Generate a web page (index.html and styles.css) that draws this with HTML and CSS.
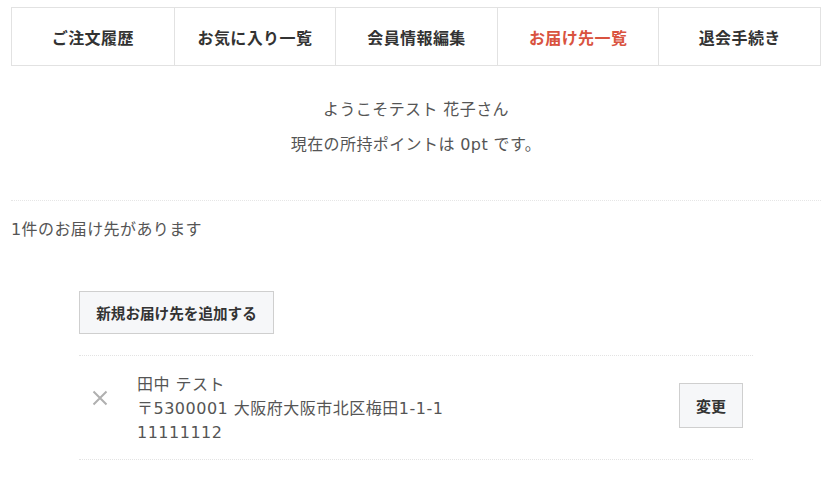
FILE: index.html
```html
<!DOCTYPE html>
<html lang="ja">
<head>
<meta charset="utf-8">
<title>お届け先一覧</title>
<link rel="stylesheet" href="styles.css">
</head>
<body>
<div class="page">
  <nav class="tabs">
    <a class="tab">ご注文履歴</a>
    <a class="tab">お気に入り一覧</a>
    <a class="tab">会員情報編集</a>
    <a class="tab active">お届け先一覧</a>
    <a class="tab">退会手続き</a>
  </nav>
  <div class="greeting">
    <p>ようこそテスト 花子さん</p>
    <p>現在の所持ポイントは 0pt です。</p>
  </div>
  <div class="count">1件のお届け先があります</div>
  <div class="list-area">
    <button class="btn btn-add">新規お届け先を追加する</button>
    <ul class="addr-list">
      <li class="addr-item">
        <span class="del">
          <svg width="16" height="16" viewBox="0 0 16 16"><path d="M1.5 1.5 L14.5 14.5 M14.5 1.5 L1.5 14.5" stroke="#b0b0b0" stroke-width="2" fill="none"/></svg>
        </span>
        <div class="addr-text">
          <div>田中 テスト</div>
          <div>〒5300001 大阪府大阪市北区梅田1-1-1</div>
          <div>11111112</div>
        </div>
        <button class="btn btn-edit">変更</button>
      </li>
    </ul>
  </div>
</div>
</body>
</html>
```
FILE: styles.css
```css
* { box-sizing: border-box; }
html, body { margin: 0; padding: 0; background: #fff; }
body {
  font-family: "DejaVu Sans", "Noto Sans CJK JP", sans-serif;
  color: #555;
  font-size: 16px;
}
.page {
  width: 830px;
  padding: 7px 9px 0 11px;
}
.tabs {
  display: grid;
  grid-template-columns: repeat(5, 1fr);
  border: 1px solid #e2e2e2;
  height: 59px;
}
.tab {
  display: flex;
  align-items: center;
  justify-content: center;
  font-family: "Noto Sans CJK JP", sans-serif;
  font-weight: bold;
  font-size: 16px;
  letter-spacing: 0.4px;
  color: #333;
  border-left: 1px solid #e2e2e2;
}
.tab:first-child { border-left: none; }
.tab.active { color: #d9533f; }
.greeting {
  text-align: center;
  padding: 26px 0 38px;
  border-bottom: 1px dotted #e6e6e6;
}
.greeting p {
  margin: 0;
  line-height: 35px;
  font-size: 16px;
  letter-spacing: 0.4px;
}
.count {
  margin-top: 17px;
  line-height: 24px;
  letter-spacing: 0.4px;
}
.list-area {
  padding: 49px 68px 0;
}
.btn {
  font-family: "Noto Sans CJK JP", sans-serif;
  background: #f6f7f9;
  border: 1px solid #cfcfcf;
  color: #333;
  font-weight: bold;
  font-size: 14.6px;
  cursor: pointer;
  padding: 0;
}
.btn-add {
  width: 195px;
  height: 43px;
  display: block;
}
.addr-list {
  list-style: none;
  margin: 21px 0 0;
  padding: 0;
  border-top: 1px dotted #e3e3e3;
}
.addr-item {
  display: flex;
  align-items: flex-start;
  padding: 17px 10px 14px 0;
  border-bottom: 1px dotted #e3e3e3;
}
.del {
  width: 58px;
  padding-left: 13px;
  display: flex;
  margin-top: 17px;
}
.addr-text {
  flex: 1;
  line-height: 24px;
  letter-spacing: 0.5px;
}
.btn-edit {
  width: 64px;
  height: 45px;
  font-size: 15px;
  margin-top: 10px;
}
```
